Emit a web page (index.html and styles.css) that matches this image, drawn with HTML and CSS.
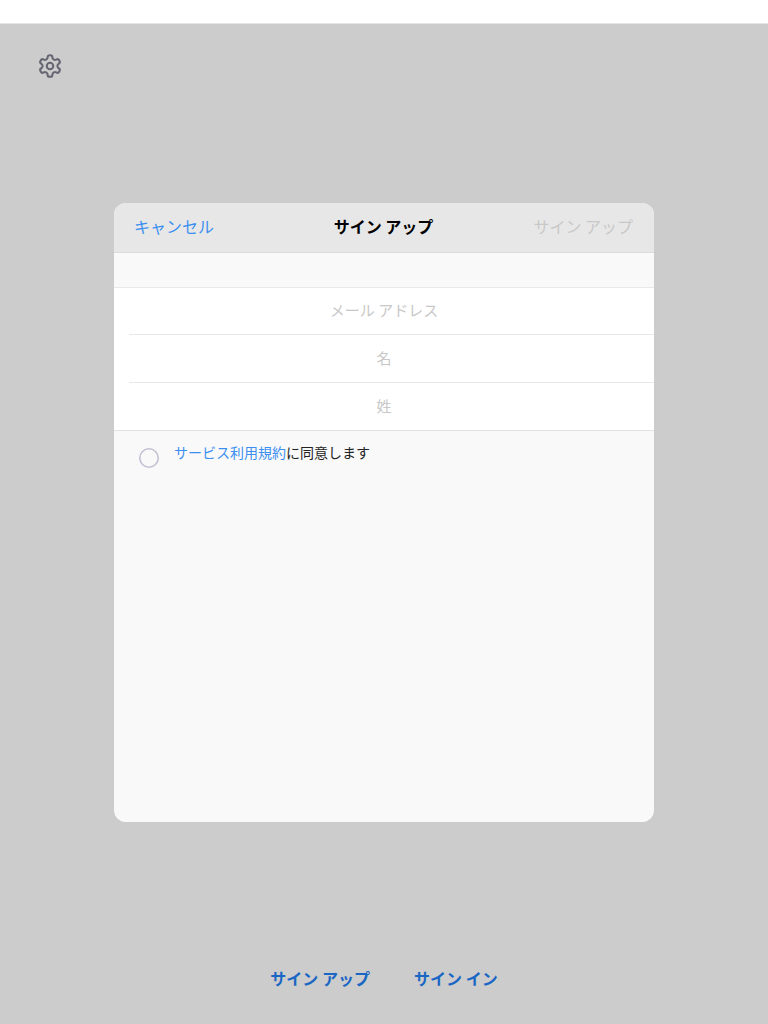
FILE: index.html
```html
<!DOCTYPE html>
<html lang="ja">
<head>
    <meta charset="UTF-8">
    <meta name="viewport" content="width=device-width, initial-scale=1.0">
    <title>サイン アップ</title>
    <link rel="stylesheet" href="styles.css">
</head>
<body>
    <div class="status-bar"></div>
    <div class="screen">
        <div class="settings">
            <svg class="gear" viewBox="0 0 24 24" width="26" height="26" fill="none" stroke="#666673" stroke-width="1.9" stroke-linecap="round" stroke-linejoin="round">
                <path d="M12.22 2h-.44a2 2 0 0 0-2 2v.18a2 2 0 0 1-1 1.73l-.43.25a2 2 0 0 1-2 0l-.15-.08a2 2 0 0 0-2.73.73l-.22.38a2 2 0 0 0 .73 2.73l.15.1a2 2 0 0 1 1 1.72v.51a2 2 0 0 1-1 1.74l-.15.09a2 2 0 0 0-.73 2.73l.22.38a2 2 0 0 0 2.73.73l.15-.08a2 2 0 0 1 2 0l.43.25a2 2 0 0 1 1 1.73V20a2 2 0 0 0 2 2h.44a2 2 0 0 0 2-2v-.18a2 2 0 0 1 1-1.73l.43-.25a2 2 0 0 1 2 0l.15.08a2 2 0 0 0 2.73-.73l.22-.39a2 2 0 0 0-.73-2.73l-.15-.08a2 2 0 0 1-1-1.74v-.5a2 2 0 0 1 1-1.74l.15-.09a2 2 0 0 0 .73-2.73l-.22-.38a2 2 0 0 0-2.73-.73l-.15.08a2 2 0 0 1-2 0l-.43-.25a2 2 0 0 1-1-1.73V4a2 2 0 0 0-2-2z"/>
                <circle cx="12" cy="12" r="3"/>
            </svg>
        </div>

        <div class="sheet">
            <div class="sheet-header">
                <span class="cancel">キャンセル</span>
                <span class="sheet-title">サイン アップ</span>
                <span class="submit">サイン アップ</span>
            </div>
            <div class="sheet-gap"></div>
            <div class="fields">
                <div class="field">メール アドレス</div>
                <div class="field">名</div>
                <div class="field">姓</div>
            </div>
            <div class="terms">
                <svg class="radio" viewBox="0 0 20 20" width="20" height="20" fill="none" stroke="#c3c1d3" stroke-width="1.6">
                    <circle cx="10" cy="10" r="9.2"/>
                </svg>
                <p class="terms-text"><span class="link">サービス利用規約</span>に同意します</p>
            </div>
        </div>

        <div class="bottom-links">
            <span>サイン アップ</span>
            <span>サイン イン</span>
        </div>
    </div>
</body>
</html>
```

FILE: styles.css
```css
body {
    margin: 0;
    padding: 0;
    height: 1024px;
    overflow: hidden;
    font-family: "Noto Sans CJK JP", "Noto Sans", sans-serif;
    background-color: #fff;
}
.status-bar {
    height: 23px;
    background: #fff;
    border-bottom: 1px solid #e4e4e4;
}
.screen {
    height: 1000px;
    display: flex;
    flex-direction: column;
    background: #ccc;
}
.settings {
    height: 179px;
    padding: 29px 0 0 37px;
    box-sizing: border-box;
}
.gear {
    display: block;
}
.sheet {
    width: 540px;
    height: 619px;
    margin: 0 auto;
    background: #f9f9f9;
    border-radius: 12px;
    overflow: hidden;
    display: flex;
    flex-direction: column;
}
.sheet-header {
    height: 45px;
    flex-shrink: 0;
    padding: 0 21px 4px 20px;
    display: grid;
    grid-template-columns: 1fr auto 1fr;
    align-items: center;
    background: #e7e7e7;
    border-bottom: 1px solid #dcdcdc;
    font-size: 16px;
    line-height: 24px;
}
.cancel {
    color: #3b8ff0;
}
.sheet-title {
    color: #000;
    font-weight: 700;
}
.submit {
    color: #c8c8c8;
    text-align: right;
}
.sheet-gap {
    height: 34px;
    flex-shrink: 0;
}
.fields {
    background: #fff;
    border-top: 1px solid #e8e8e8;
    border-bottom: 1px solid #e2e2e2;
    padding-left: 15px;
}
.field {
    height: 47px;
    line-height: 45px;
    padding-right: 15px;
    text-align: center;
    font-size: 15px;
    color: #c8c8c8;
    border-bottom: 1px solid #e8e8e8;
}
.field:first-child {
    height: 46px;
    line-height: 44px;
}
.field:last-child {
    border-bottom: none;
}
.terms {
    display: flex;
    align-items: flex-start;
    padding: 11px 0 0 25px;
}
.radio {
    flex-shrink: 0;
    margin-top: 6px;
}
.terms-text {
    margin: 0 0 0 15px;
    font-size: 14px;
    line-height: 20px;
    color: #222;
}
.link {
    color: #3b8ff0;
}
.bottom-links {
    display: flex;
    justify-content: center;
    gap: 44px;
    padding-top: 144px;
    font-size: 16px;
    line-height: 24px;
    font-weight: 700;
    color: #1a66c4;
}
```
